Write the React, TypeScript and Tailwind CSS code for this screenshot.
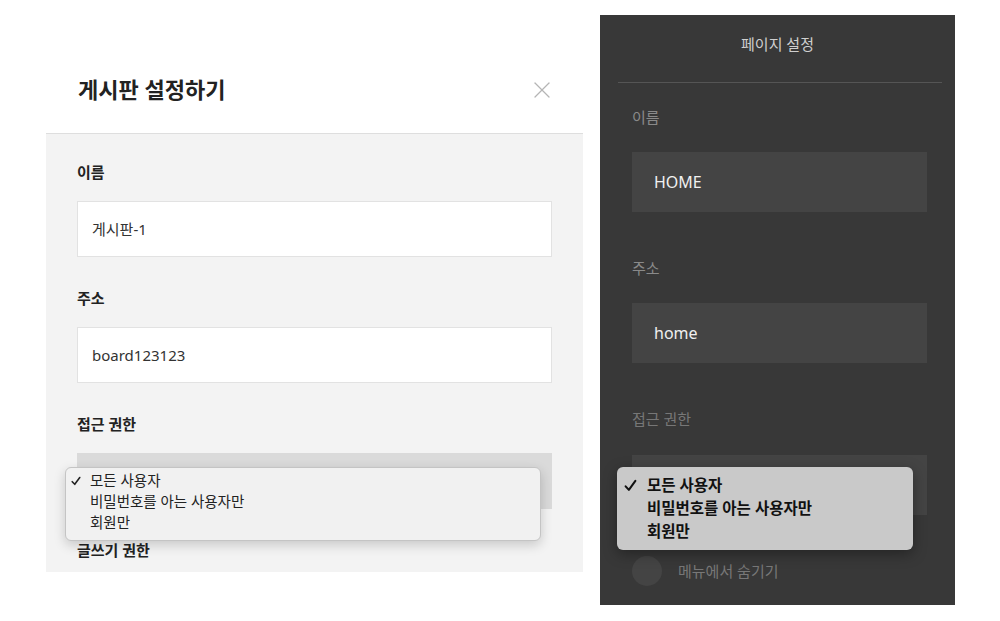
import { X } from "lucide-react";

const font = { fontFamily: '"Noto Sans", "Noto Sans CJK KR", sans-serif' };

function Check({ className }: { className: string }) {
  return (
    <svg viewBox="0 0 12 12" className={className} fill="none">
      <path d="M1.5 6.8 L4.5 10 L10.5 1.8" stroke="currentColor" strokeWidth="1.9" strokeLinecap="round" strokeLinejoin="round" />
    </svg>
  );
}

function LightField({ label, children }: { label: string; children: React.ReactNode }) {
  return (
    <div className="mb-[31px]">
      <p className="mb-[19px] h-5 text-[15px] font-bold leading-5 text-[#222]">{label}</p>
      {children}
    </div>
  );
}

function DarkField({ label, children }: { label: string; children: React.ReactNode }) {
  return (
    <div className="mb-[46px]">
      <p className="mb-[25px] h-5 text-[15px] leading-5 text-[#8a8a8a]">{label}</p>
      {children}
    </div>
  );
}

function BoardSettings() {
  return (
    <div className="ml-[46px] mt-[46px] w-[537px]">
      <div className="flex h-[88px] items-center justify-between border-b border-[#dedede] bg-white pl-[32px] pr-[27px]">
        <h1 className="text-[22px] font-bold text-[#222]">게시판 설정하기</h1>
        <X className="h-[28px] w-[28px] text-[#b5b5b5]" strokeWidth={1.1} />
      </div>
      <div className="h-[438px] overflow-hidden bg-[#f3f3f3] px-[31px] pt-[28px]">
        <LightField label="이름">
          <div className="flex h-14 items-center border border-[#e2e2e2] bg-white px-[14px] text-[15px] text-[#333]">
            게시판-1
          </div>
        </LightField>
        <LightField label="주소">
          <div className="flex h-14 items-center border border-[#e2e2e2] bg-white px-[14px] text-[15px] text-[#333]">
            board123123
          </div>
        </LightField>
        <LightField label="접근 권한">
          <div className="relative h-14 bg-[#dadada]">
            <div className="absolute left-[-12px] top-[14px] z-10 h-[74px] w-[476px] rounded-[6px] border border-[#c4c4c4] bg-[#f1f1f1] pt-[2px] text-[14.5px] leading-[21px] text-[#222] shadow-[0_4px_12px_rgba(0,0,0,0.18)]">
              <div className="flex items-center">
                <span className="flex w-[24px] justify-start pl-[5px]">
                  <Check className="h-[10px] w-[10px] text-[#222]" />
                </span>
                <span>모든 사용자</span>
              </div>
              <div className="pl-[24px]">비밀번호를 아는 사용자만</div>
              <div className="pl-[24px]">회원만</div>
            </div>
          </div>
        </LightField>
        <p className="h-5 text-[15px] font-bold leading-5 text-[#222]">글쓰기 권한</p>
      </div>
    </div>
  );
}

function PageSettings() {
  return (
    <div className="ml-[17px] mt-[15px] h-[590px] w-[355px] overflow-hidden bg-[#383838]">
      <p className="pt-[19px] text-center text-[15px] leading-5 text-[#cfcfcf]">페이지 설정</p>
      <div className="ml-[18px] mr-[13px] mt-[28px] h-px bg-[#555]" />
      <div className="pl-[32px] pr-[28px] pt-[24px]">
        <DarkField label="이름">
          <div className="flex h-[60px] items-center bg-[#444] px-[22px] text-[16px] text-[#f0f0f0]">HOME</div>
        </DarkField>
        <DarkField label="주소">
          <div className="flex h-[60px] items-center bg-[#444] px-[22px] text-[16px] text-[#f0f0f0]">home</div>
        </DarkField>
        <div className="mb-[41px]">
          <p className="mb-[26px] h-5 text-[15px] leading-5 text-[#777]">접근 권한</p>
          <div className="relative h-[60px] bg-[#444]">
            <div className="absolute left-[-15px] top-[12px] z-10 h-[83px] w-[296px] rounded-[6px] bg-[#c9c9c9] pt-[7px] text-[15.5px] font-semibold leading-[23px] text-[#111] shadow-[0_4px_14px_rgba(0,0,0,0.35)]">
              <div className="flex items-center">
                <span className="flex w-[30px] pl-[7px]">
                  <Check className="h-[13px] w-[13px] text-[#111]" />
                </span>
                <span>모든 사용자</span>
              </div>
              <div className="pl-[30px]">비밀번호를 아는 사용자만</div>
              <div className="pl-[30px]">회원만</div>
            </div>
          </div>
        </div>
        <div className="flex items-center gap-[16px]">
          <div className="h-[30px] w-[30px] rounded-full bg-[#444]" />
          <span className="text-[15px] text-[#777]">메뉴에서 숨기기</span>
        </div>
      </div>
    </div>
  );
}

export default function App() {
  return (
    <div className="flex h-[621px] w-[1000px] items-start bg-white" style={font}>
      <BoardSettings />
      <PageSettings />
    </div>
  );
}
